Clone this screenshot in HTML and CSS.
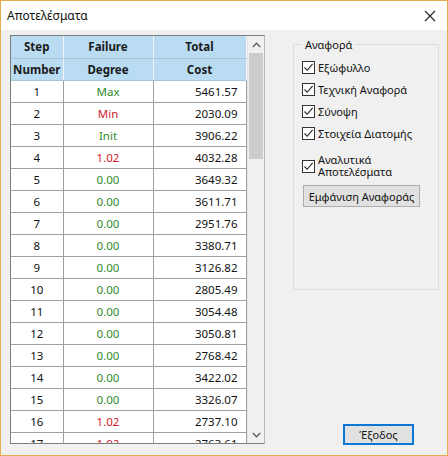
FILE: index.html
```html
<!DOCTYPE html>
<html>
<head>
<meta charset="utf-8">
<link rel="stylesheet" href="styles.css">
</head>
<body>
<div class="window">
  <div class="titlebar">
    <span class="title">Αποτελέσματα</span>
    <svg class="close" width="12" height="12" viewBox="0 0 12 12"><path d="M1 1L11 11M11 1L1 11" stroke="#222" stroke-width="1.1" fill="none"/></svg>
  </div>
  <div class="content">
    <div class="grid">
      <div class="tablewrap">
        <table>
          <colgroup><col class="c1"><col class="c2"><col class="c3"></colgroup>
          <thead>
            <tr><th>Step</th><th>Failure</th><th>Total</th></tr>
            <tr><th>Number</th><th>Degree</th><th>Cost</th></tr>
          </thead>
          <tbody>
            <tr><td>1</td><td class="g">Max</td><td class="n">5461.57</td></tr>
            <tr><td>2</td><td class="r">Min</td><td class="n">2030.09</td></tr>
            <tr><td>3</td><td class="g">Init</td><td class="n">3906.22</td></tr>
            <tr><td>4</td><td class="r">1.02</td><td class="n">4032.28</td></tr>
            <tr><td>5</td><td class="g">0.00</td><td class="n">3649.32</td></tr>
            <tr><td>6</td><td class="g">0.00</td><td class="n">3611.71</td></tr>
            <tr><td>7</td><td class="g">0.00</td><td class="n">2951.76</td></tr>
            <tr><td>8</td><td class="g">0.00</td><td class="n">3380.71</td></tr>
            <tr><td>9</td><td class="g">0.00</td><td class="n">3126.82</td></tr>
            <tr><td>10</td><td class="g">0.00</td><td class="n">2805.49</td></tr>
            <tr><td>11</td><td class="g">0.00</td><td class="n">3054.48</td></tr>
            <tr><td>12</td><td class="g">0.00</td><td class="n">3050.81</td></tr>
            <tr><td>13</td><td class="g">0.00</td><td class="n">2768.42</td></tr>
            <tr><td>14</td><td class="g">0.00</td><td class="n">3422.02</td></tr>
            <tr><td>15</td><td class="g">0.00</td><td class="n">3326.07</td></tr>
            <tr><td>16</td><td class="r">1.02</td><td class="n">2737.10</td></tr>
            <tr><td>17</td><td class="r">1.02</td><td class="n">2763.61</td></tr>
          </tbody>
        </table>
      </div>
      <div class="scrollbar">
        <div class="arrow"><svg width="9" height="6" viewBox="0 0 9 6"><path d="M0.8 5L4.5 1.3L8.2 5" stroke="#606060" stroke-width="1.4" fill="none"/></svg></div>
        <div class="track"><div class="thumb"></div></div>
        <div class="arrow"><svg width="9" height="6" viewBox="0 0 9 6"><path d="M0.8 1L4.5 4.7L8.2 1" stroke="#606060" stroke-width="1.4" fill="none"/></svg></div>
      </div>
    </div>
    <div class="side">
      <fieldset class="group">
        <legend>Αναφορά</legend>
        <label class="chk"><span class="box"><svg width="11" height="11" viewBox="0 0 11 11"><path d="M1.5 5.5L4.2 8.3L9.6 1.8" stroke="#222" stroke-width="1.1" fill="none"/></svg></span>Εξώφυλλο</label>
        <label class="chk"><span class="box"><svg width="11" height="11" viewBox="0 0 11 11"><path d="M1.5 5.5L4.2 8.3L9.6 1.8" stroke="#222" stroke-width="1.1" fill="none"/></svg></span>Τεχνική Αναφορά</label>
        <label class="chk"><span class="box"><svg width="11" height="11" viewBox="0 0 11 11"><path d="M1.5 5.5L4.2 8.3L9.6 1.8" stroke="#222" stroke-width="1.1" fill="none"/></svg></span>Σύνοψη</label>
        <label class="chk"><span class="box"><svg width="11" height="11" viewBox="0 0 11 11"><path d="M1.5 5.5L4.2 8.3L9.6 1.8" stroke="#222" stroke-width="1.1" fill="none"/></svg></span>Στοιχεία Διατομής</label>
        <label class="chk two"><span class="box"><svg width="11" height="11" viewBox="0 0 11 11"><path d="M1.5 5.5L4.2 8.3L9.6 1.8" stroke="#222" stroke-width="1.1" fill="none"/></svg></span><span class="lines">Αναλυτικά<br>Αποτελέσματα</span></label>
        <button class="btn report">Εμφάνιση Αναφοράς</button>
      </fieldset>
      <div class="footer"><button class="btn exit">Έξοδος</button></div>
    </div>
  </div>
</div>
</body>
</html>
```
FILE: styles.css
```css
* { box-sizing: border-box; }
html, body { margin: 0; padding: 0; }
body {
  font-family: "Noto Sans", "Open Sans", sans-serif;
  font-size: 11.5px;
  color: #000;
  background: #f0f0f0;
}
.window {
  width: 448px;
  height: 456px;
  border: 1px solid #e3ad51;
  background: #f0f0f0;
  display: flex;
  flex-direction: column;
  overflow: hidden;
}
.titlebar {
  height: 29px;
  background: #fff;
  display: flex;
  align-items: center;
  justify-content: space-between;
  padding: 0 11px 0 6px;
  flex: none;
}
.title { font-size: 12px; color: #111; }
.close { display: block; }
.content {
  flex: 1;
  display: flex;
  padding: 5px 0 0 9px;
  min-height: 0;
}
.grid {
  width: 255px;
  height: 409px;
  border: 1px solid #7d7d7d;
  border-right-color: #b8b8b8;
  display: flex;
  background: #fff;
  flex: none;
}
.tablewrap {
  width: 236px;
  overflow: hidden;
}
table {
  border-collapse: collapse;
  width: 235px;
  table-layout: fixed;
}
col.c1 { width: 52px; }
col.c2 { width: 90px; }
col.c3 { width: 93px; }
th {
  background: #b9dcf2;
  font-weight: bold;
  height: 22px;
  padding: 0;
  text-align: center;
  color: #1a1a1a;
  border-right: 1px solid #f4f4f4;
  border-bottom: 1px solid #a9c6d9;
  font-size: 11.5px;
}
td {
  height: 22px;
  padding: 0;
  text-align: center;
  border-right: 1px solid #a0a0a0;
  border-bottom: 1px solid #a0a0a0;
  color: #111;
}
td.n { text-align: right; padding-right: 8px; }
td.g { color: #2f8a2f; }
td.r { color: #cc1a2c; }
.scrollbar {
  width: 17px;
  display: flex;
  flex-direction: column;
  background: #f0f0f0;
  border-left: 1px solid #e6e6e6;
}
.arrow {
  height: 17px;
  display: flex;
  align-items: center;
  justify-content: center;
  flex: none;
}
.track { flex: 1; padding: 0 1px; }
.thumb { height: 106px; background: #cdcdcd; }
.side {
  flex: 1;
  display: flex;
  flex-direction: column;
  padding: 0 8px 0 28px;
  font-size: 11px;
}
.group {
  margin: 2px 0 0 0;
  padding: 4px 0 0 8px;
  height: 253px;
  border: 1px solid #dcdcdc;
  display: flex;
  flex-direction: column;
  align-items: flex-start;
}
legend {
  padding: 0 3px;
  margin-left: 0;
  font-size: 11px;
  color: #111;
}
.chk {
  display: flex;
  align-items: center;
  height: 22px;
  color: #111;
}
.box {
  width: 13px;
  height: 13px;
  border: 1px solid #333;
  background: #fff;
  margin-right: 3px;
  display: flex;
  align-items: center;
  justify-content: center;
  flex: none;
}
.box svg { display: block; }
.chk.two { height: 26px; margin-top: 9px; line-height: 12px; }
.lines { display: block; }
.btn {
  font-family: inherit;
  font-size: 11px;
  color: #111;
  background: #e1e1e1;
  border: 1px solid #adadad;
  padding: 0;
  margin: 0;
}
.report {
  width: 117px;
  height: 22px;
  margin: 6px 0 0 1px;
}
.footer {
  flex: 1;
  display: flex;
  align-items: flex-end;
  justify-content: flex-start;
  padding: 0 0 10px 50px;
}
.exit {
  width: 71px;
  height: 21px;
  border: 2px solid #0a78d4;
}
```
